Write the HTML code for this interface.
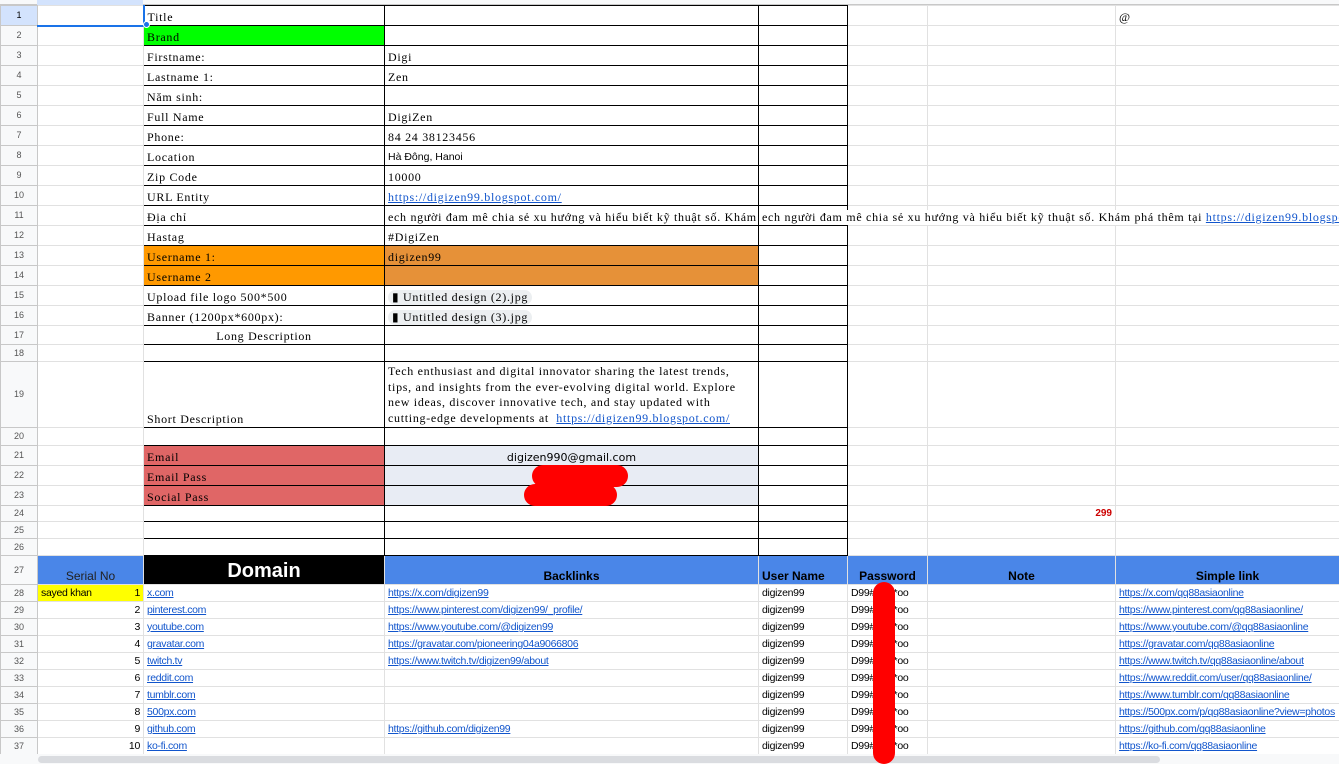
<!DOCTYPE html>
<html><head><meta charset="utf-8">
<style>
*{margin:0;padding:0;box-sizing:border-box}
body{width:1339px;height:764px;overflow:hidden;background:#fff;position:relative;font-family:"Liberation Serif",serif;font-size:12px;color:#000}
table{border-collapse:collapse;table-layout:fixed;position:absolute;left:0;top:5px;width:1339px}
td{border:1px solid #e1e1e1;padding:0 3px;white-space:nowrap;overflow:hidden;vertical-align:bottom;line-height:15px;letter-spacing:0.7px}
td.h{background:#f8f9fa;color:#555;font-family:"Liberation Sans",sans-serif;font-size:9px;text-align:center;vertical-align:middle;border-color:#c8c8c8;padding:0;letter-spacing:0}
.k{border:1px solid #000}
.g td:not(.h){font-family:"Liberation Sans",sans-serif;font-size:10.5px;letter-spacing:-0.3px}
tr.hd td{letter-spacing:0}
a{color:#1155cc;text-decoration:underline}
.ov{overflow:visible}
.chip{display:inline-block;background:#eceff1;border-radius:8px;padding:0 4px;line-height:15px}
.r{position:absolute;background:#ff0000;border-radius:12px}
</style></head><body>
<div style="position:absolute;left:0;top:0;width:1339px;height:5px;background:#f8f9fa;border-bottom:1px solid #c8c8c8"></div>
<div style="position:absolute;left:37px;top:0;width:106px;height:5px;background:#d3e3fd"></div>
<table>
<colgroup><col style="width:37px"><col style="width:106px"><col style="width:241px"><col style="width:374px"><col style="width:89px"><col style="width:80px"><col style="width:188px"><col style="width:224px"></colgroup>
<tr style="height:20px"><td class="h" style="background:#d3e3fd;color:#000">1</td><td style="border-bottom:2px solid #1a73e8"></td><td class="k" style="border-left:2px solid #1a73e8">Title</td><td class="k"></td><td class="k"></td><td></td><td></td><td>@</td></tr>
<tr style="height:20px"><td class="h">2</td><td></td><td class="k" style="background:#00ff00">Brand</td><td class="k"></td><td class="k"></td><td></td><td></td><td></td></tr>
<tr style="height:20px"><td class="h">3</td><td></td><td class="k">Firstname:</td><td class="k">Digi</td><td class="k"></td><td></td><td></td><td></td></tr>
<tr style="height:20px"><td class="h">4</td><td></td><td class="k">Lastname 1:</td><td class="k">Zen</td><td class="k"></td><td></td><td></td><td></td></tr>
<tr style="height:20px"><td class="h">5</td><td></td><td class="k">Năm sinh:</td><td class="k"></td><td class="k"></td><td></td><td></td><td></td></tr>
<tr style="height:20px"><td class="h">6</td><td></td><td class="k">Full Name</td><td class="k">DigiZen</td><td class="k"></td><td></td><td></td><td></td></tr>
<tr style="height:20px"><td class="h">7</td><td></td><td class="k">Phone:</td><td class="k">84 24 38123456</td><td class="k"></td><td></td><td></td><td></td></tr>
<tr style="height:20px"><td class="h">8</td><td></td><td class="k">Location</td><td class="k" style="font-family:'Liberation Sans',sans-serif;font-size:10.5px;letter-spacing:0">Hà Đông, Hanoi</td><td class="k"></td><td></td><td></td><td></td></tr>
<tr style="height:20px"><td class="h">9</td><td></td><td class="k">Zip Code</td><td class="k">10000</td><td class="k"></td><td></td><td></td><td></td></tr>
<tr style="height:20px"><td class="h">10</td><td></td><td class="k">URL Entity</td><td class="k"><a>https://digizen99.blogspot.com/</a></td><td class="k"></td><td></td><td></td><td></td></tr>
<tr style="height:20px"><td class="h">11</td><td></td><td class="k">Địa chỉ</td><td class="k">ech người đam mê chia sẻ xu hướng và hiểu biết kỹ thuật số. Khám phá thêm tại</td><td class="k ov"><div style="position:relative;z-index:2;width:580px;background:#fff;overflow:hidden">ech người đam mê chia sẻ xu hướng và hiểu biết kỹ thuật số. Khám phá thêm tại <a>https://digizen99.blogspot.com/</a></div></td><td></td><td></td><td></td></tr>
<tr style="height:20px"><td class="h">12</td><td></td><td class="k">Hastag</td><td class="k">#DigiZen</td><td class="k"></td><td></td><td></td><td></td></tr>
<tr style="height:20px"><td class="h">13</td><td></td><td class="k" style="background:#ff9900">Username 1:</td><td class="k" style="background:#e69138">digizen99</td><td class="k"></td><td></td><td></td><td></td></tr>
<tr style="height:20px"><td class="h">14</td><td></td><td class="k" style="background:#ff9900">Username 2</td><td class="k" style="background:#e69138"></td><td class="k"></td><td></td><td></td><td></td></tr>
<tr style="height:20px"><td class="h">15</td><td></td><td class="k">Upload file logo 500*500</td><td class="k"><span class="chip">&#9646; Untitled design (2).jpg</span></td><td class="k"></td><td></td><td></td><td></td></tr>
<tr style="height:20px"><td class="h">16</td><td></td><td class="k">Banner (1200px*600px):</td><td class="k"><span class="chip">&#9646; Untitled design (3).jpg</span></td><td class="k"></td><td></td><td></td><td></td></tr>
<tr style="height:19px"><td class="h">17</td><td></td><td class="k" style="text-align:center">Long Description</td><td class="k"></td><td class="k"></td><td></td><td></td><td></td></tr>
<tr style="height:17px"><td class="h">18</td><td></td><td class="k"></td><td class="k"></td><td class="k"></td><td></td><td></td><td></td></tr>
<tr style="height:66px"><td class="h">19</td><td></td><td class="k">Short Description</td><td class="k" style="white-space:normal;line-height:15.5px;padding-bottom:1px;padding-right:12px">Tech enthusiast and digital innovator sharing the latest trends, tips, and insights from the ever-evolving digital world. Explore new ideas, discover innovative tech, and stay updated with cutting-edge developments at &nbsp;<a>https://digizen99.blogspot.com/</a></td><td class="k"></td><td></td><td></td><td></td></tr>
<tr style="height:18px"><td class="h">20</td><td></td><td class="k"></td><td class="k"></td><td class="k"></td><td></td><td></td><td></td></tr>
<tr style="height:20px"><td class="h">21</td><td></td><td class="k" style="background:#e06666">Email</td><td class="k" style="background:#e8ecf4;text-align:center;font-family:'DejaVu Sans',sans-serif;font-size:11px;letter-spacing:0">digizen990@gmail.com</td><td class="k"></td><td></td><td></td><td></td></tr>
<tr style="height:20px"><td class="h">22</td><td></td><td class="k" style="background:#e06666">Email Pass</td><td class="k" style="background:#e8ecf4"></td><td class="k"></td><td></td><td></td><td></td></tr>
<tr style="height:20px"><td class="h">23</td><td></td><td class="k" style="background:#e06666">Social Pass</td><td class="k" style="background:#e8ecf4"></td><td class="k"></td><td></td><td></td><td></td></tr>
<tr style="height:16px"><td class="h">24</td><td></td><td class="k"></td><td class="k"></td><td class="k"></td><td></td><td style="text-align:right;color:#cc0000;font-weight:bold;font-family:'Liberation Sans',sans-serif;font-size:10px;letter-spacing:0">299</td><td></td></tr>
<tr style="height:17px"><td class="h">25</td><td></td><td class="k"></td><td class="k"></td><td class="k"></td><td></td><td></td><td></td></tr>
<tr style="height:17px"><td class="h">26</td><td></td><td class="k"></td><td class="k"></td><td class="k"></td><td></td><td></td><td></td></tr>
<tr class="hd" style="height:29px;font-family:'Liberation Sans',sans-serif;font-size:12px"><td class="h">27</td><td style="background:#4a86e8;text-align:center;color:#222;font-family:'Liberation Sans',sans-serif">Serial No</td><td style="background:#000;color:#fff;text-align:center;font-weight:bold;font-size:20px;font-family:'Liberation Sans',sans-serif;line-height:26px">Domain</td><td style="background:#4a86e8;text-align:center;font-weight:bold;font-family:'Liberation Sans',sans-serif">Backlinks</td><td style="background:#4a86e8;font-weight:bold;font-family:'Liberation Sans',sans-serif">User Name</td><td style="background:#4a86e8;text-align:center;font-weight:bold;font-family:'Liberation Sans',sans-serif">Password</td><td style="background:#4a86e8;text-align:center;font-weight:bold;font-family:'Liberation Sans',sans-serif">Note</td><td style="background:#4a86e8;text-align:center;font-weight:bold;font-family:'Liberation Sans',sans-serif">Simple link</td></tr>
<tr class="g" style="height:17px"><td class="h">28</td><td style="background:#ffff00">sayed khan<span style="float:right">1</span></td><td><a>x.com</a></td><td><a>https://x.com/digizen99</a></td><td>digizen99</td><td>D99#&nbsp;&nbsp;&nbsp;&nbsp;&nbsp;o*oo</td><td></td><td><a>https://x.com/qq88asiaonline</a></td></tr>
<tr class="g" style="height:17px"><td class="h">29</td><td style="text-align:right">2</td><td><a>pinterest.com</a></td><td><a>https://www.pinterest.com/digizen99/_profile/</a></td><td>digizen99</td><td>D99#&nbsp;&nbsp;&nbsp;&nbsp;&nbsp;o*oo</td><td></td><td><a>https://www.pinterest.com/qq88asiaonline/</a></td></tr>
<tr class="g" style="height:17px"><td class="h">30</td><td style="text-align:right">3</td><td><a>youtube.com</a></td><td><a>https://www.youtube.com/@digizen99</a></td><td>digizen99</td><td>D99#&nbsp;&nbsp;&nbsp;&nbsp;&nbsp;o*oo</td><td></td><td><a>https://www.youtube.com/@qq88asiaonline</a></td></tr>
<tr class="g" style="height:17px"><td class="h">31</td><td style="text-align:right">4</td><td><a>gravatar.com</a></td><td><a>https://gravatar.com/pioneering04a9066806</a></td><td>digizen99</td><td>D99#&nbsp;&nbsp;&nbsp;&nbsp;&nbsp;o*oo</td><td></td><td><a>https://gravatar.com/qq88asiaonline</a></td></tr>
<tr class="g" style="height:17px"><td class="h">32</td><td style="text-align:right">5</td><td><a>twitch.tv</a></td><td><a>https://www.twitch.tv/digizen99/about</a></td><td>digizen99</td><td>D99#&nbsp;&nbsp;&nbsp;&nbsp;&nbsp;o*oo</td><td></td><td><a>https://www.twitch.tv/qq88asiaonline/about</a></td></tr>
<tr class="g" style="height:17px"><td class="h">33</td><td style="text-align:right">6</td><td><a>reddit.com</a></td><td></td><td>digizen99</td><td>D99#&nbsp;&nbsp;&nbsp;&nbsp;&nbsp;o*oo</td><td></td><td><a>https://www.reddit.com/user/qq88asiaonline/</a></td></tr>
<tr class="g" style="height:17px"><td class="h">34</td><td style="text-align:right">7</td><td><a>tumblr.com</a></td><td></td><td>digizen99</td><td>D99#&nbsp;&nbsp;&nbsp;&nbsp;&nbsp;o*oo</td><td></td><td><a>https://www.tumblr.com/qq88asiaonline</a></td></tr>
<tr class="g" style="height:17px"><td class="h">35</td><td style="text-align:right">8</td><td><a>500px.com</a></td><td></td><td>digizen99</td><td>D99#&nbsp;&nbsp;&nbsp;&nbsp;&nbsp;o*oo</td><td></td><td><a>https://500px.com/p/qq88asiaonline?view=photos</a></td></tr>
<tr class="g" style="height:17px"><td class="h">36</td><td style="text-align:right">9</td><td><a>github.com</a></td><td><a>https://github.com/digizen99</a></td><td>digizen99</td><td>D99#&nbsp;&nbsp;&nbsp;&nbsp;&nbsp;o*oo</td><td></td><td><a>https://github.com/qq88asiaonline</a></td></tr>
<tr class="g" style="height:17px"><td class="h">37</td><td style="text-align:right">10</td><td><a>ko-fi.com</a></td><td></td><td>digizen99</td><td>D99#&nbsp;&nbsp;&nbsp;&nbsp;&nbsp;o*oo</td><td></td><td><a>https://ko-fi.com/qq88asiaonline</a></td></tr>
</table>
<div style="position:absolute;left:0;top:754px;width:1339px;height:10px;background:#f8f9fa"></div>
<div style="position:absolute;left:38px;top:756px;width:1122px;height:7px;background:#dadce0;border-radius:4px"></div>
<div class="r" style="left:532px;top:465px;width:96px;height:22px"></div>
<div class="r" style="left:524px;top:484px;width:93px;height:22px"></div>
<div class="r" style="left:873px;top:582px;width:22px;height:182px;border-radius:11px"></div>
<div style="position:absolute;left:143px;top:21px;width:7px;height:7px;border-radius:50%;background:#1a73e8;border:1px solid #fff"></div>
</body></html>
